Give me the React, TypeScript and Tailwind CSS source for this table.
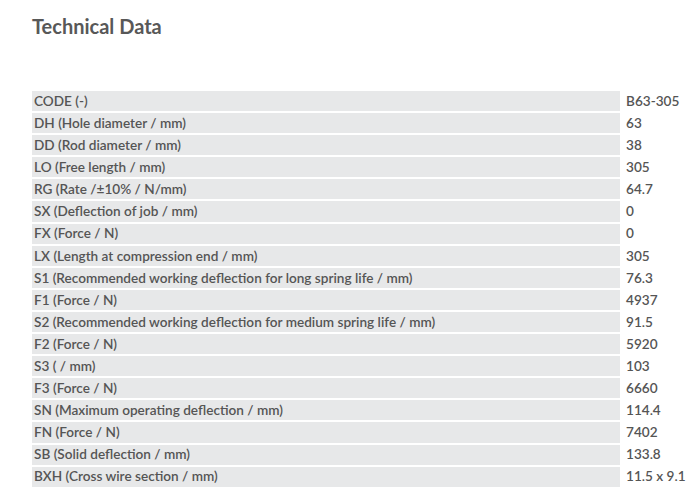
const rows: [string, string][] = [
  ["CODE (-)", "B63-305"],
  ["DH (Hole diameter / mm)", "63"],
  ["DD (Rod diameter / mm)", "38"],
  ["LO (Free length / mm)", "305"],
  ["RG (Rate /±10% / N/mm)", "64.7"],
  ["SX (Deflection of job / mm)", "0"],
  ["FX (Force / N)", "0"],
  ["LX (Length at compression end / mm)", "305"],
  ["S1 (Recommended working deflection for long spring life / mm)", "76.3"],
  ["F1 (Force / N)", "4937"],
  ["S2 (Recommended working deflection for medium spring life / mm)", "91.5"],
  ["F2 (Force / N)", "5920"],
  ["S3 ( / mm)", "103"],
  ["F3 (Force / N)", "6660"],
  ["SN (Maximum operating deflection / mm)", "114.4"],
  ["FN (Force / N)", "7402"],
  ["SB (Solid deflection / mm)", "133.8"],
  ["BXH (Cross wire section / mm)", "11.5 x 9.1"],
];

export default function App() {
  return (
    <div className="min-h-[497px] w-[695px] bg-white pl-8 pt-3 text-[#555] [font-family:Lato,'Liberation_Sans',sans-serif]">
      <h2 className="text-[20px] font-bold leading-[28px] text-[#585858]">Technical Data</h2>

      <div className="mt-[51px] flex flex-col">
        {rows.map(([label, value]) => (
          <div key={label} className="flex h-[22.1px] items-stretch">
            <div className="flex w-[588px] items-center border-b-2 border-white bg-[#e7e8e9] pl-[2px] text-[13.6px] font-semibold">
              {label}
            </div>
            <div className="flex items-center border-b-2 border-white pl-[6px] text-[13.6px] font-semibold">
              {value}
            </div>
          </div>
        ))}
      </div>
    </div>
  );
}
